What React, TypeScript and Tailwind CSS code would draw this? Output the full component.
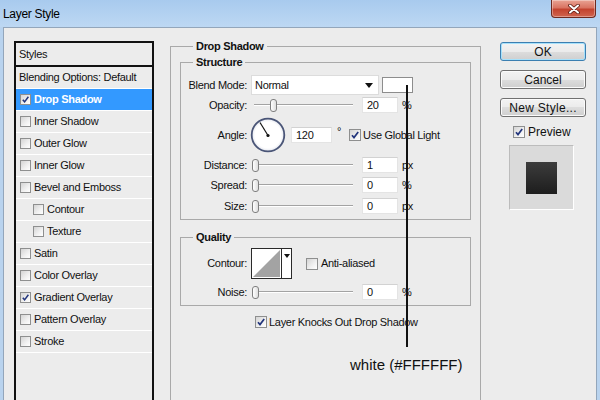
import React from "react";

function Checkbox({ checked = false, small = false }: { checked?: boolean; small?: boolean }) {
  return (
    <span
      className={
        "relative shrink-0 border border-[#8e8f8f] bg-[linear-gradient(135deg,#d4d4d4_0%,#f1f1f1_60%,#ffffff_100%)] " +
        (small ? "w-[11px] h-[11px]" : "w-[12px] h-[12px]")
      }
    >
      {checked && (
        <svg className="absolute inset-0 w-full h-full" viewBox="0 0 10 10">
          <path d="M2 5.2 L4 7.6 L8.2 2" fill="none" stroke="#22357c" strokeWidth="1.7" />
        </svg>
      )}
    </span>
  );
}

function Slider({ pos }: { pos: number }) {
  return (
    <div className="relative w-[103px] h-[16px] shrink-0">
      <div className="absolute left-[3px] right-[1px] top-[7px] h-[2px] border-t border-[#a3a3a3] border-b border-b-white" />
      <div
        className="absolute top-[2px] w-[7px] h-[13px] rounded-[3px] border border-[#808080] bg-[linear-gradient(90deg,#ffffff,#dedede)]"
        style={{ left: pos }}
      />
    </div>
  );
}

function NumInput({ value, wide = false }: { value: string; wide?: boolean }) {
  return (
    <div
      className={
        "h-[16px] shrink-0 bg-white border border-[#e4e4e4] border-t-[#d2d2d2] pl-[4px] text-[11px] leading-[14px] " +
        (wide ? "w-[41px] ml-[5px]" : "w-[36px] ml-[8px]")
      }
    >
      {value}
    </div>
  );
}

function Label({ children }: { children: React.ReactNode }) {
  return <span className="w-[66px] shrink-0 text-right">{children}</span>;
}

function SliderRow({ label, pos, value, unit, className }: { label: string; pos: number; value: string; unit: string; className: string }) {
  return (
    <div className={"flex items-center h-[16px] " + className}>
      <Label>{label}</Label>
      <span className="ml-[4px] flex">
        <Slider pos={pos} />
      </span>
      <NumInput value={value} />
      <span className="ml-[4px]">{unit}</span>
    </div>
  );
}

const items: { label: string; checked?: boolean; selected?: boolean; sub?: boolean; plain?: boolean }[] = [
  { label: "Blending Options: Default", plain: true },
  { label: "Drop Shadow", checked: true, selected: true },
  { label: "Inner Shadow" },
  { label: "Outer Glow" },
  { label: "Inner Glow" },
  { label: "Bevel and Emboss" },
  { label: "Contour", sub: true },
  { label: "Texture", sub: true },
  { label: "Satin" },
  { label: "Color Overlay" },
  { label: "Gradient Overlay", checked: true },
  { label: "Pattern Overlay" },
  { label: "Stroke" },
];

function Button({ children, primary = false, className = "" }: { children: React.ReactNode; primary?: boolean; className?: string }) {
  return (
    <div
      className={
        "h-[19px] w-[86px] rounded-[3px] border flex items-center justify-center text-[12px] leading-none bg-[linear-gradient(#f3f3f3_0%,#ebebeb_50%,#dddddd_50%,#cfcfcf_100%)] " +
        (primary ? "border-[#3c7fb1] shadow-[inset_0_0_0_1px_#a6e1fb] " : "border-[#707070] shadow-[inset_0_0_0_1px_#fbfbfb] ") +
        className
      }
    >
      {children}
    </div>
  );
}

export default function App() {
  return (
    <div className="relative w-[600px] h-[400px] overflow-hidden bg-[#b9d3ee] flex flex-col font-['Liberation_Sans',Arial,sans-serif] text-[#111]">
      {/* Title bar */}
      <div className="h-[27px] shrink-0 flex items-start justify-between bg-[linear-gradient(#a8caee,#bdd8f3)]">
        <span className="pl-[3px] h-[27px] flex items-center text-[12px] tracking-[-0.3px] text-black">Layer Style</span>
        <div className="mr-[4px] w-[45px] h-[18px] rounded-b-[4px] border border-t-0 border-[#6e2a20] bg-[linear-gradient(#e9a394_0%,#d97462_45%,#c3432f_55%,#d0654f_100%)] shadow-[inset_0_0_0_1px_rgba(255,255,255,0.35)] flex items-center justify-center">
          <svg width="12" height="10" viewBox="0 0 12 10">
            <path d="M2 1.5 L10 8.5 M10 1.5 L2 8.5" stroke="#5a1a12" strokeWidth="3.6" strokeLinecap="round" />
            <path d="M2 1.5 L10 8.5 M10 1.5 L2 8.5" stroke="#ffffff" strokeWidth="2" strokeLinecap="round" />
          </svg>
        </div>
      </div>

      {/* Frame */}
      <div className="flex-1 px-[3px] flex">
        <div className="flex-1 bg-[#ececec] border-t border-x border-[#93a6bb] flex items-start pt-[13px] text-[11px] tracking-[-0.3px]">
          {/* Styles panel */}
          <div className="ml-[10px] w-[140px] h-[400px] shrink-0 flex flex-col">
            <div className="h-[26px] border-2 border-[#111] flex items-center pl-[3px]">Styles</div>
            <div className="flex-1 border-x-2 border-[#111]">
              {items.map((it) => (
                <div
                  key={it.label}
                  className={
                    "h-[22px] border-b border-white flex items-center " +
                    (it.selected ? "bg-[#3399ff] text-white font-bold " : "") +
                    (it.plain ? "pl-[3px]" : it.sub ? "pl-[17px] gap-[3px]" : "pl-[4px] gap-[3px]")
                  }
                >
                  {!it.plain && <Checkbox small checked={it.checked} />}
                  <span>{it.label}</span>
                </div>
              ))}
            </div>
          </div>

          {/* Drop Shadow group */}
          <fieldset className="ml-[16px] w-[311px] h-[400px] shrink-0 border border-[#a9a9a9] pl-[9px] pr-[8px] pt-[5px]">
            <legend className="ml-[13px] px-[3px] font-bold leading-[11px]">Drop Shadow</legend>

            <fieldset className="w-[291px] border border-[#a9a9a9] pt-[7px] pb-[5px]">
              <legend className="ml-[12px] px-[3px] font-bold leading-[11px]">Structure</legend>

              <div className="flex items-center h-[20px]">
                <Label>Blend Mode:</Label>
                <div className="ml-[4px] w-[128px] h-[20px] bg-white border border-[#dcdcdc] flex items-center justify-between pl-[3px] pr-[5px]">
                  <span>Normal</span>
                  <svg width="8" height="5" viewBox="0 0 8 5">
                    <path d="M0 0 H8 L4 5 Z" fill="#111" />
                  </svg>
                </div>
                <div className="ml-[3px] w-[31px] h-[16px] bg-white border border-[#8d8d8d]" />
              </div>

              <SliderRow label="Opacity:" pos={19} value="20" unit="%" className="mt-[2px]" />

              <div className="flex items-center h-[36px] mt-[4px]">
                <Label>Angle:</Label>
                <svg className="ml-[3px] shrink-0" width="36" height="36" viewBox="0 0 36 36">
                  <defs>
                    <radialGradient id="dialg" cx="0.5" cy="0.5" r="0.5">
                      <stop offset="0.8" stopColor="#ffffff" />
                      <stop offset="1" stopColor="#e3e6ee" />
                    </radialGradient>
                  </defs>
                  <circle cx="18" cy="18" r="16.3" fill="url(#dialg)" stroke="#4a5577" strokeWidth="1.8" />
                  <line x1="18" y1="18.5" x2="10" y2="5.5" stroke="#111" strokeWidth="1.2" />
                  <circle cx="18" cy="18.5" r="1.6" fill="#111" />
                </svg>
                <NumInput value="120" wide />
                <span className="ml-[5px] mb-[8px] leading-none">°</span>
                <span className="ml-[8px] flex items-center gap-[2px]">
                  <Checkbox checked />
                  <span>Use Global Light</span>
                </span>
              </div>

              <SliderRow label="Distance:" pos={1} value="1" unit="px" className="mt-[4px]" />
              <SliderRow label="Spread:" pos={1} value="0" unit="%" className="mt-[4px]" />
              <SliderRow label="Size:" pos={1} value="0" unit="px" className="mt-[5px]" />
            </fieldset>

            <fieldset className="mt-[12px] w-[291px] border border-[#a9a9a9] pt-[5px] pb-[5px]">
              <legend className="ml-[12px] px-[3px] font-bold leading-[11px]">Quality</legend>

              <div className="flex items-center h-[31px]">
                <Label>Contour:</Label>
                <div className="ml-[4px] w-[41px] h-[31px] border border-[#2a2a2a] bg-white flex">
                  <svg className="shrink-0" width="29" height="29" viewBox="0 0 29 29">
                    <polygon points="1,28 28,1 28,28" fill="#a3a3a3" />
                  </svg>
                  <div className="w-[10px] h-full border-l border-[#2a2a2a] flex justify-center pt-[5px]">
                    <svg width="6" height="4" viewBox="0 0 6 4">
                      <path d="M0 0 H6 L3 4 Z" fill="#111" />
                    </svg>
                  </div>
                </div>
                <span className="ml-[14px] flex items-center gap-[3px]">
                  <Checkbox />
                  <span>Anti-aliased</span>
                </span>
              </div>

              <SliderRow label="Noise:" pos={1} value="0" unit="%" className="mt-[5px]" />
            </fieldset>

            <div className="mt-[8px] ml-[75px] flex items-center gap-[2px]">
              <Checkbox checked />
              <span>Layer Knocks Out Drop Shadow</span>
            </div>
          </fieldset>

          {/* Buttons */}
          <div className="ml-[19px] w-[86px] shrink-0 flex flex-col mt-[1px] tracking-normal">
            <Button primary>OK</Button>
            <Button className="mt-[9px]">Cancel</Button>
            <Button className="mt-[9px] tracking-[0.3px]">New Style...</Button>
            <div className="mt-[8px] ml-[13px] flex items-center gap-[3px] text-[12px] h-[13px]">
              <Checkbox checked />
              <span>Preview</span>
            </div>
            <div className="mt-[7px] ml-[9px] w-[65px] h-[65px] border border-[#bcbcbc] border-r-white border-b-white bg-[#dadada] flex items-center justify-center">
              <div className="w-[31px] h-[32px] bg-[linear-gradient(#3c3c3c,#1d1d1d)]" />
            </div>
          </div>
        </div>
      </div>

      {/* Annotation */}
      <div className="absolute left-[406px] top-[85px] w-[2px] h-[262px] bg-[#111]" />
      <div className="absolute left-[350px] top-[356px] text-[15px] leading-[17px] text-[#111] font-['Liberation_Sans',Arial,sans-serif]">
        white (#FFFFFF)
      </div>
    </div>
  );
}
